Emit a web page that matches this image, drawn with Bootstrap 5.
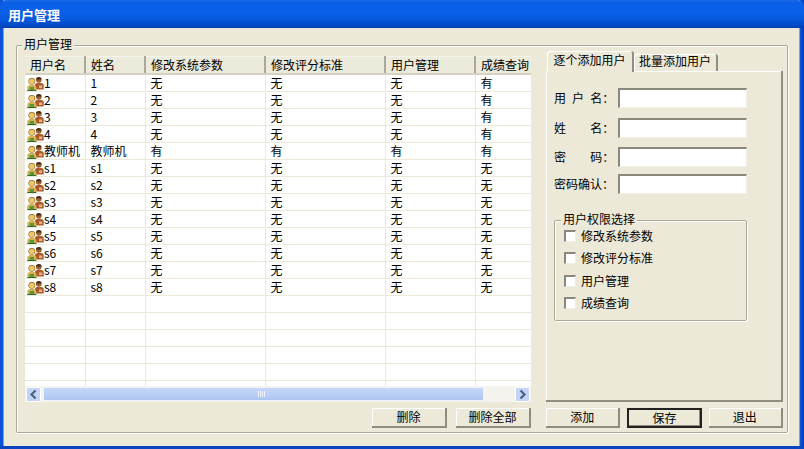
<!DOCTYPE html>
<html lang="zh"><head><meta charset="utf-8"><title>用户管理</title>
<link rel="stylesheet" href="https://cdn.jsdelivr.net/npm/bootstrap@5.3.0/dist/css/bootstrap.min.css">
<style>
html,body{margin:0;width:804px;height:449px;overflow:hidden;background:#ECE9D8}
body,.win *{font-family:"Noto Sans CJK SC",sans-serif;font-size:12px;line-height:16px;color:#000}
.win{width:804px;height:449px;background:linear-gradient(90deg,#0a4fd0 0,#0a58e0 3px,#ECE9D8 4px,#ECE9D8 799px,#0a58e0 800px,#0037b8 804px)}
.ttl{height:28px;background:linear-gradient(180deg,#1a6ae8 0,#0a5ee6 3px,#0a61ea 12px,#0758dc 20px,#0044bd 27px,#003aa8 28px);padding:6px 0 0 8px;border-radius:6px 6px 0 0}
.win .ttl span{color:#fff;font-weight:700;font-size:13px;line-height:17px}
.wbody{height:418px;padding:17px 0 0 16px}
.foot{height:3px;background:#0a45c0}
.grp{border:1px solid #aca899;border-radius:2px;box-shadow:inset 1px 1px 0 #fff,1px 1px 0 #fff;position:relative}
.grp-main{width:772px;height:388px;padding:10px 0 0 8px}
.cap{position:absolute;left:5px;top:-10px;background:#ECE9D8;padding:0 2px}
.grp-perm .cap{left:6px}
.lst{width:506px;height:330px;overflow:hidden;background:#fff}
.grid{table-layout:fixed;border-collapse:collapse;width:506px;margin:0}
.grid th{height:18px;background:#ebeadb;font-weight:400;padding:0 0 1px 5px;border-bottom:2px solid #d6d2c2;border-right:2px solid #aca899;box-shadow:inset 0 1px 0 #f5f4ea;line-height:15px}
.grid th:last-child{border-right:0}
.grid td{height:17px;padding:0 0 1px 5px;border-bottom:1px solid #ece9d8;border-right:1px solid #ece9d8;white-space:nowrap;line-height:15px;overflow:hidden}
.grid td:first-child{padding-left:2px}
.grid td:last-child{border-right:0}
.ppl{width:17px;height:14px;vertical-align:-2px;margin:-2px 0 -1px}
.sb{width:506px;height:16px;gap:2px;padding:1px;background:#f4f3ee}
.arr{width:15px;height:15px;background:#c3d4f7;border:1px solid #fff;border-radius:2px;flex:none}
.arr svg{display:block;margin:1px}
.thumb{width:441px;height:14px;background:linear-gradient(180deg,#c6d6f8,#b9cdf6 60%,#aec4f0);border:1px solid #eef2fd;border-radius:2px}
.thumb svg{display:block}
.tr0{flex:1}
.side{width:237px;margin-left:15px;margin-top:-5px}
.tabs{height:20px;padding-left:1px}
.tb{border:0;background:#ECE9D8;border-right:2px solid #918e7f;box-shadow:inset 1px 1px 0 #fff;border-radius:3px 3px 0 0;text-align:center}
.tb-on{width:87px;height:21px;padding-top:1px;position:relative;z-index:1}
.tb-off{width:84px;height:17px;margin-top:3px;line-height:14px}
.panel{width:237px;height:331px;border-right:2px solid #918e7f;border-bottom:2px solid #918e7f;box-shadow:inset 1px 1px 0 #fff;padding:17px 0 0 8px}
.lb{width:64px;flex:none;word-spacing:3.4px}
.fld{width:129px;height:20px;background:#fff;border:0;border-top:2px solid #8a887a;border-left:2px solid #8a887a;border-right:1px solid #f1efe2;border-bottom:1px solid #f1efe2;padding:0;display:block;border-radius:0}
.r1{height:20px;margin-bottom:10px}.r2{height:20px;margin-bottom:9px}.r3{height:20px;margin-bottom:7px}
.grp-perm{width:193px;height:101px;margin-top:26px;padding:4px 0 0 9px}
.ck{height:22.3px}
.bx{width:12px;height:12px;background:#fff;border:0;border-top:2px solid #8a887a;border-left:2px solid #8a887a;border-right:1px solid #f1efe2;border-bottom:1px solid #f1efe2;margin-right:5px;flex:none}
.acts{width:506px;margin-top:6px;gap:9px}
.acts2{width:237px;margin-left:15px;margin-top:6px;gap:7px}
.xb{width:75px;height:20px;padding:0;background:#ECE9D8;border:0;border-right:2px solid #8f8c7d;border-bottom:2px solid #8f8c7d;box-shadow:inset 1px 1px 0 #fff;border-radius:0;text-align:center;line-height:18px}
.xb-def{border:2px solid #222;box-shadow:inset -1px -1px 0 #8f8c7d;line-height:16px}
</style></head>
<body>
<svg width="0" height="0" class="position-absolute"><defs>
<symbol id="ppl" viewBox="0 0 17 14">
<circle cx="11.800" cy="3" r="2.800" fill="#9a6034"/><path d="M8.900 2.600C9.200 .9 10.400 .1 11.800 .1s2.600.8 2.900 2.500z" fill="#4a2a12"/>
<path d="M8 12.500V7.800C8 6.500 9.600 5.800 12 5.800s4.700.7 4.700 2v4.700z" fill="#a9592a"/><rect x="12" y="8.500" width="3.200" height="2.600" fill="#e5b48a"/>
<circle cx="4.800" cy="4.300" r="3.400" fill="#8d6a26"/><circle cx="4.800" cy="4.500" r="2.800" fill="#f0c468"/>
<path d="M.3 13.700V10.400C.3 8.800 2.300 7.800 4.800 7.800s4.600 1 4.600 2.600v3.300z" fill="#dcae4e"/><path d="M2.600 13.700V10h4.400v3.700z" fill="#4f9a3c"/><path d="M.3 13.500h9" stroke="#2f6a28"/>
</symbol></defs></svg>
<div class="win">
<div class="ttl"><span>用户管理</span></div>
<div class="wbody">
<div class="grp grp-main">
<div class="cap">用户管理</div>
<div class="d-flex">
<div>
<div class="lst">
<table class="grid"><colgroup><col style="width:60px"><col style="width:60px"><col style="width:120px"><col style="width:120px"><col style="width:90px"><col style="width:56px"></colgroup>
<thead><tr><th>用户名</th><th>姓名</th><th>修改系统参数</th><th>修改评分标准</th><th>用户管理</th><th>成绩查询</th></tr></thead>
<tbody id="rows"></tbody></table>
</div>
<div class="sb d-flex align-items-center">
<div class="arr"><svg width="11" height="11" viewBox="0 0 11 11"><path d="M7.500 1.500 3.500 5.500l4 4" fill="none" stroke="#4d6185" stroke-width="2.200"/></svg></div>
<div class="thumb"><svg width="439" height="12"><path d="M214.500 3v6M216.500 3v6M218.500 3v6M220.500 3v6" stroke="#eef3fe" stroke-width="1"/></svg></div>
<div class="tr0"></div>
<div class="arr"><svg width="11" height="11" viewBox="0 0 11 11"><path d="M3.500 1.500l4 4-4 4" fill="none" stroke="#4d6185" stroke-width="2.200"/></svg></div>
</div>
</div>
<div class="side">
<div class="tabs d-flex"><div class="tb tb-on">逐个添加用户</div><div class="tb tb-off">批量添加用户</div></div>
<div class="panel">
<div class="d-flex align-items-center r1"><div class="lb">用 户 名：</div><input class="fld" type="text" aria-label="用户名"></div>
<div class="d-flex align-items-center r2"><div class="lb">姓&nbsp;&nbsp;&nbsp;&nbsp;名：</div><input class="fld" type="text" aria-label="姓名"></div>
<div class="d-flex align-items-center r3"><div class="lb">密&nbsp;&nbsp;&nbsp;&nbsp;码：</div><input class="fld" type="text" aria-label="密码"></div>
<div class="d-flex align-items-center"><div class="lb">密码确认：</div><input class="fld" type="text" aria-label="密码确认"></div>
<div class="grp grp-perm">
<div class="cap">用户权限选择</div>
<div class="d-flex align-items-center ck"><span class="bx"></span>修改系统参数</div>
<div class="d-flex align-items-center ck"><span class="bx"></span>修改评分标准</div>
<div class="d-flex align-items-center ck"><span class="bx"></span>用户管理</div>
<div class="d-flex align-items-center ck"><span class="bx"></span>成绩查询</div>
</div>
</div>
</div>
</div>
<div class="d-flex">
<div class="acts d-flex justify-content-end"><button class="xb">删除</button><button class="xb">删除全部</button></div>
<div class="acts2 d-flex"><button class="xb">添加</button><button class="xb xb-def">保存</button><button class="xb">退出</button></div>
</div>
</div>
</div>
<div class="foot"></div>
</div>
<script>
var d=[];['1','2','3','4'].forEach(function(n){d.push([n,'无','无','无','有'])});
d.push(['教师机','有','有','有','有']);
for(var i=1;i<=8;i++)d.push(['s'+i,'无','无','无','无']);
var h='';var icon='<svg class="ppl"><use href="#ppl"/></svg>';
d.forEach(function(r){h+='<tr><td>'+icon+r[0]+'</td><td>'+r[0]+'</td><td>'+r[1]+'</td><td>'+r[2]+'</td><td>'+r[3]+'</td><td>'+r[4]+'</td></tr>'});
for(var j=0;j<6;j++)h+='<tr><td></td><td></td><td></td><td></td><td></td><td></td></tr>';
document.getElementById('rows').innerHTML=h;
</script>
</body></html>
